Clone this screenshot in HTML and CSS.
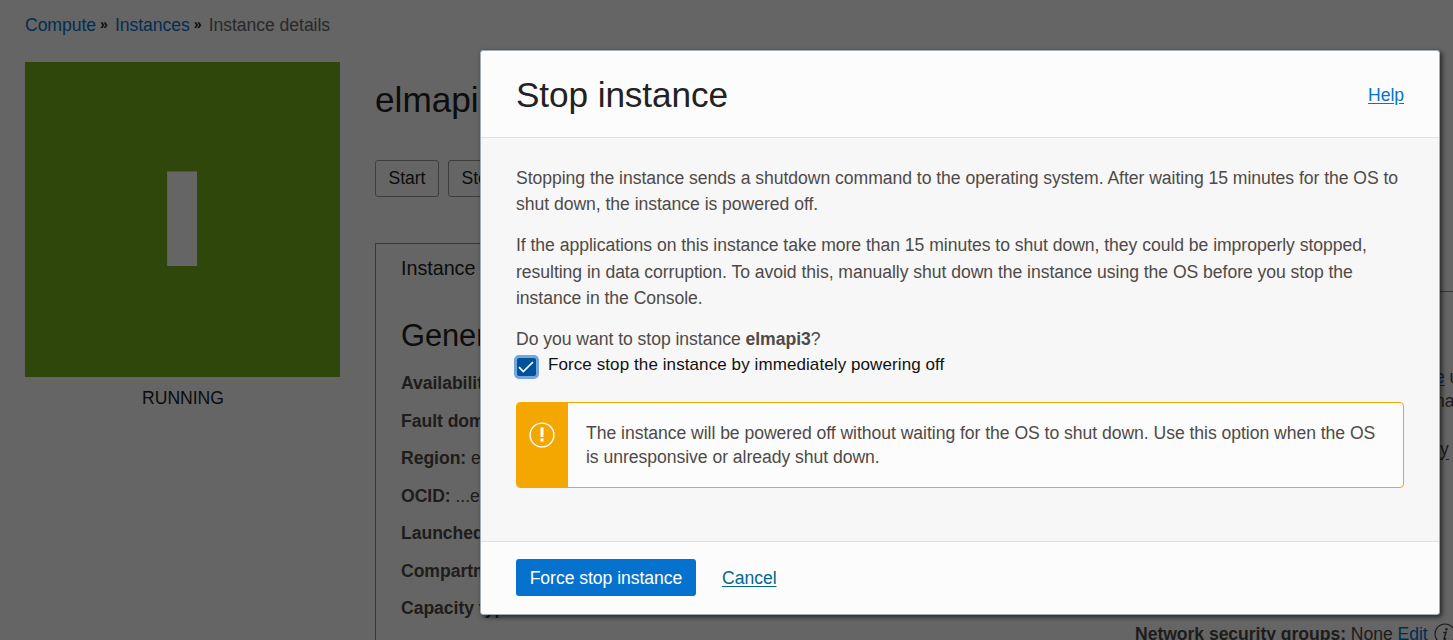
FILE: index.html
```html
<!DOCTYPE html>
<html lang="en">
<head>
<meta charset="utf-8">
<title>Instance details</title>
<link rel="stylesheet" href="styles.css">
</head>
<body>
<div class="page">
  <nav class="crumbs"><a>Compute</a><span class="sep">»</span><a>Instances</a><span class="sep">»</span><span class="here">Instance details</span></nav>
  <div class="columns">
    <aside class="status">
      <div class="tile"><span class="letter">I</span></div>
      <div class="state">RUNNING</div>
    </aside>
    <main class="main">
      <h1 class="name">elmapi3</h1>
      <div class="actions"><button class="btn">Start</button><button class="btn">Stop</button></div>
      <div class="tabs"><div class="tab">Instance</div><div class="tabline"></div></div>
      <div class="panel">
        <section class="general">
          <h2 class="heading">General</h2>
          <p class="row"><b>Availability</b></p>
          <p class="row"><b>Fault domain:</b></p>
          <p class="row"><b>Region:</b> e</p>
          <p class="row"><b>OCID:</b> ...e</p>
          <p class="row"><b>Launched:</b></p>
          <p class="row"><b>Compartment:</b></p>
          <p class="row"><b>Capacity type:</b></p>
        </section>
        <section class="access">
          <p class="side first"><a class="under">e</a> u</p>
          <p class="side second">na</p>
          <p class="side third"><span class="dotted">y</span></p>
          <p class="groups"><span><b>Network security groups:</b> None <a>Edit</a></span>
            <svg class="info" viewBox="0 0 22 22"><circle cx="11" cy="11" r="10" fill="none" stroke="currentColor" stroke-width="1.2"/><circle cx="12.5" cy="6.3" r="1.2" fill="currentColor"/><path d="M9.3 9.8 12 9.2 10 15.8Q10 17 12.2 15.4" fill="none" stroke="currentColor" stroke-width="1.5"/></svg>
          </p>
        </section>
      </div>
    </main>
  </div>
</div>
<div class="overlay">
  <div class="dialog" role="dialog">
    <header class="head"><h2 class="title">Stop instance</h2><a class="help">Help</a></header>
    <div class="body">
      <p class="para">Stopping the instance sends a shutdown command to the operating system. After waiting 15 minutes for the OS to<br>shut down, the instance is powered off.</p>
      <p class="para">If the applications on this instance take more than 15 minutes to shut down, they could be improperly stopped,<br>resulting in data corruption. To avoid this, manually shut down the instance using the OS before you stop the<br>instance in the Console.</p>
      <p class="ask">Do you want to stop instance <b>elmapi3</b>?</p>
      <label class="check"><span class="box"><svg viewBox="0 0 18 18" width="18" height="18"><path d="M2 9.2 6.3 13.5 16 4" fill="none" stroke="#fff" stroke-width="1.7"/></svg></span><span class="force">Force stop the instance by immediately powering off</span></label>
      <div class="warning">
        <div class="mark"><svg viewBox="0 0 26 26" width="26" height="26"><circle cx="13" cy="13" r="11.9" fill="none" stroke="#fff" stroke-width="1.4"/><path d="M11.5 5.5h3v9.5h-3zM11.5 16.5h3v3h-3z" fill="#fff"/></svg></div>
        <p class="note">The instance will be powered off without waiting for the OS to shut down. Use this option when the OS<br>is unresponsive or already shut down.</p>
      </div>
    </div>
    <footer class="foot"><button class="primary">Force stop instance</button><a class="cancel">Cancel</a></footer>
  </div>
</div>
</body>
</html>
```
FILE: styles.css
```css
* { box-sizing: border-box; }
html, body { margin: 0; height: 640px; overflow: hidden; }
body { font: 17.6px/24px "Liberation Sans", Arial, sans-serif; letter-spacing: -.045px; color: #4f4a47; background: #fdfdfd; white-space: nowrap; }
h1, h2, p { margin: 0; font-weight: normal; }
button { font: inherit; letter-spacing: inherit; }
a { color: #0572ce; }

.page { width: 1453px; height: 640px; overflow: hidden; padding: 13px 0 0 25px; }
.crumbs { display: flex; height: 49px; letter-spacing: -.06px; }
.sep { color: #222; width: 18px; padding-left: 4px; font-size: 14px; font-weight: bold; line-height: 22px; }
.sep + a { margin-left: 1px; }
.here { color: #666; margin-left: 1px; }
.columns { display: flex; }
.status { width: 350px; flex: none; }
.tile { width: 315px; height: 315px; padding: 0 1px 2px 0; background: #76b219; display: flex; align-items: center; justify-content: center; }
.letter { font-size: 136.6px; line-height: 136px; font-weight: bold; color: #fdfdfd; transform: scaleX(1.52); }
.state { width: 316px; text-align: center; color: #222; padding-top: 9px; }
.main { flex: 1; }
.name { font-size: 35.2px; line-height: 40px; letter-spacing: 0; color: #222; padding-top: 18px; height: 98px; }
.actions { display: flex; gap: 9px; height: 83px; }
.btn { height: 37px; padding: 0 12.5px 2px; color: #222; background: transparent; border: 1px solid #999; border-radius: 3px; }
.tabs { display: flex; height: 49px; }
.tab { border: 1px solid #8c8c8c; border-width: 1px 1px 0; width: 206px; padding: 12px 25px; font-size: 19.8px; color: #222; }
.tabline { flex: 1; border-bottom: 1px solid #8c8c8c; }
.panel { display: flex; height: 348px; border-left: 1px solid #8c8c8c; padding-left: 25px; }
.general { width: 734px; flex: none; }
.heading { font-size: 30.8px; line-height: 36px; color: #222; padding-top: 26px; height: 73px; }
.row { height: 37.5px; line-height: 37px; }
.row b, .groups b { color: #4f4a47; }
.access { padding-top: 73px; }
.side { height: 24px; }
.first { padding-left: 300px; }
.second { padding-left: 300px; height: 48px; }
.third { padding-left: 305px; height: 185px; }
.under { text-decoration: underline; text-underline-offset: 2px; }
.dotted { border-bottom: 1px dashed #4f4a47; }
.groups { display: flex; gap: 6px; height: 24px; letter-spacing: -.05px; }
.info { width: 22px; height: 22px; flex: none; margin-top: 1px; color: #4f4a47; }

.overlay { position: absolute; inset: 0; background: rgba(0, 0, 0, .6); padding: 50px 0 0 480px; }
.dialog { width: 960px; height: 565px; display: flex; flex-direction: column; background: #fcfcfc; border: 1px solid #a3adb5; border-radius: 3px; box-shadow: 2px 2px 5px rgba(0, 0, 0, .65); overflow: hidden; }
.head { height: 87px; flex: none; display: flex; align-items: center; justify-content: space-between; padding: 2px 35px 0; border-bottom: 1px solid #e1e1e1; }
.title { font-size: 35.2px; line-height: 40px; letter-spacing: -.1px; color: #222; }
.help { text-decoration: underline; text-underline-offset: 2px; }
.body { flex: 1; background: #f7f7f7; padding: 27px 35px 0; }
.para { line-height: 26.4px; margin-bottom: 14.4px; }
.ask { line-height: 26px; }
.check { display: flex; height: 50px; color: #111; }
.box { width: 25px; height: 24px; margin: 3px 9px 0 -2px; background: #015299; border: 3px solid #73a5df; border-radius: 5px; }
.box svg { display: block; }
.force { font-size: 17px; line-height: 26px; letter-spacing: .09px; }
.warning { display: flex; height: 86px; background: #fcfcfc; border: 1px solid #f4a700; border-radius: 4px; overflow: hidden; }
.mark { width: 51px; background: #f4a700; padding: 19.5px 0 0 12px; }
.note { padding: 18px 0 0 18px; }
.foot { height: 73px; flex: none; border-top: 1px solid #e1e1e1; padding: 17px 35px; display: flex; gap: 26px; }
.primary { width: 180px; height: 37px; padding: 0; border: 0; border-radius: 3px; background: #0572ce; color: #fff; }
.cancel { color: #00688c; text-decoration: underline; text-underline-offset: 2px; line-height: 38px; }
```
